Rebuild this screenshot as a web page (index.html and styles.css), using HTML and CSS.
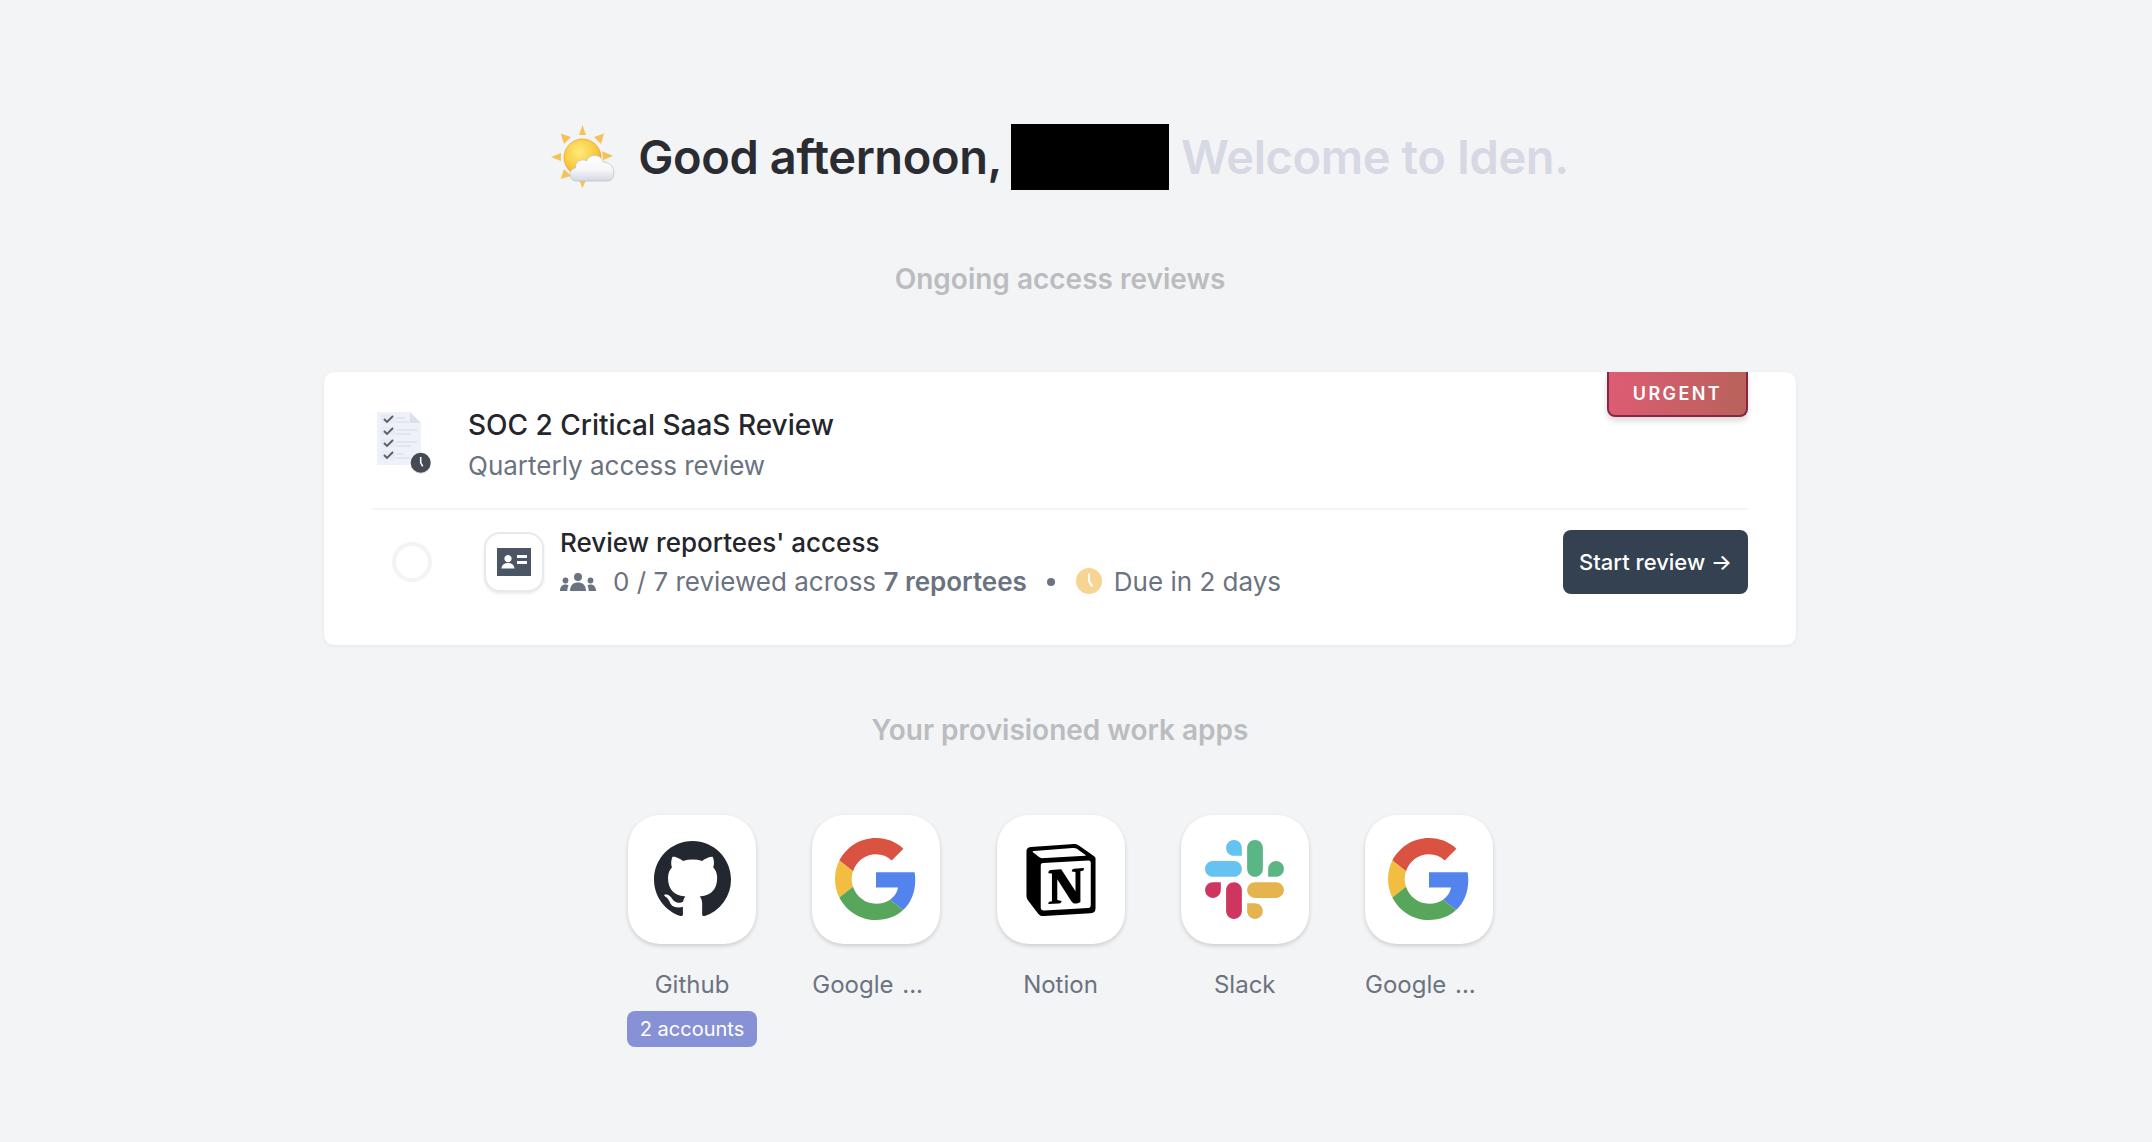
FILE: index.html
```html
<!DOCTYPE html>
<html lang="en">
<head>
<meta charset="utf-8">
<title>Iden</title>
<link rel="stylesheet" href="styles.css">
</head>
<body>
<main class="page">
  <h1 class="greeting">
    <svg class="emoji" viewBox="0 0 64 64" aria-hidden="true">
      <defs>
        <radialGradient id="sun" cx="42%" cy="35%" r="70%"><stop offset="0" stop-color="#fdeb7c"/><stop offset=".65" stop-color="#fac93c"/><stop offset="1" stop-color="#f0a030"/></radialGradient>
        <linearGradient id="cloud" x1="0" y1="0" x2="0" y2="1"><stop offset="0" stop-color="#ffffff"/><stop offset=".55" stop-color="#f7f7fa"/><stop offset="1" stop-color="#d5d8e1"/></linearGradient>
      </defs>
      <g fill="#f6c257">
        <polygon points="31.500,0 35,10 28,10"/>
        <polygon points="31.500,63 35,55 28,55"/>
        <polygon points="0,32 10,28 10,36"/>
        <polygon points="62,31 51,26 52,35"/>
        <polygon points="9.700,8.500 20,12 13,19"/>
        <polygon points="53,8.500 43,12 50,19"/>
        <polygon points="9.700,54 13,44 20,51"/>
      </g>
      <circle cx="31.500" cy="32.500" r="18.500" fill="url(#sun)" stroke="#e99a3c" stroke-width=".7"/>
      <path fill="url(#cloud)" stroke="#b9bdc8" stroke-width=".7" d="M26 56 C17 56 17 44 24.500 43 C23.500 36 32 33 35.500 36 C38.500 28 50.500 29 52 37 C60 37 64.500 45 62.500 50 C62.500 54 59 56 56 56 Z"/>
    </svg>
    <span class="hello">Good afternoon,</span>
    <span class="redacted"></span>
    <span class="welcome">Welcome to Iden.</span>
  </h1>

  <h2 class="section-title first">Ongoing access reviews</h2>

  <section class="card">
    <span class="urgent">URGENT</span>
    <header class="review-head">
      <svg class="doc" viewBox="0 0 60 64" aria-hidden="true">
        <path d="M5 1 H38 L49 12 V54 H5 Z" fill="#eff1f9"/>
        <path d="M38 1 L49 12 H38 Z" fill="#dde0ea"/>
        <g fill="#e9ebf4">
          <rect x="9" y="3.500" width="14" height="9"/>
          <rect x="9" y="15.500" width="14" height="9"/>
          <rect x="9" y="27.500" width="14" height="9"/>
          <rect x="9" y="39.500" width="14" height="9"/>
        </g>
        <g fill="none" stroke="#575d68" stroke-width="1.800">
          <path d="M12 8 l3 3 l6 -6"/>
          <path d="M12 20 l3 3 l6 -6"/>
          <path d="M12 32 l3 3 l6 -6"/>
          <path d="M12 44 l3 3 l6 -6"/>
        </g>
        <g fill="none" stroke="#e2e5f0" stroke-width="2">
          <path d="M24 7 h9 M24 11 h13"/>
          <path d="M24 19 h21 M24 23 h15"/>
          <path d="M24 31 h21 M24 35 h15"/>
          <path d="M24 43 h8 M24 47 h14"/>
        </g>
        <circle cx="48.700" cy="53" r="10" fill="#000" opacity=".12"/>
        <circle cx="48.700" cy="51.700" r="10" fill="#454a53"/>
        <path d="M48.700 46 v5.500 l2 3.800" fill="none" stroke="#fff" stroke-width="1.600"/>
      </svg>
      <div class="head-text">
        <div class="review-title">SOC 2 Critical SaaS Review</div>
        <div class="review-sub">Quarterly access review</div>
      </div>
    </header>
    <div class="task">
      <span class="radio"></span>
      <span class="task-icon">
        <svg viewBox="0 0 34 28" width="34" height="28" aria-hidden="true">
          <path fill-rule="evenodd" fill="#4b5563" d="M0 0 H34 V28 H0 Z M11 7 a3.600 3.600 0 1 0 .01 0 Z M4.500 20.500 c.4-4 3.300-5.500 6.500-5.500 s6.100 1.500 6.500 5.500 Z M20 7 v3 h10 v-3 Z M20 13 v3 h10 v-3 Z"/>
        </svg>
      </span>
      <div class="task-body">
        <div class="task-title">Review reportees' access</div>
        <div class="task-meta">
          <svg class="people" viewBox="0 0 36 18" aria-hidden="true">
            <g fill="#6b7280">
              <circle cx="18" cy="4" r="4"/>
              <path d="M10 18 c0-6 3.500-8.500 8-8.500 s8 2.500 8 8.500 Z"/>
              <circle cx="5.500" cy="7.500" r="2.900"/>
              <circle cx="30.500" cy="7.500" r="2.900"/>
              <path d="M0 18 c0-4 2-6.500 5.500-6.500 c1.300 0 2.300.3 3.100.9 c-.9 1.500-1.300 3.300-1.300 5.600 Z"/>
              <path d="M36 18 c0-4-2-6.500-5.500-6.500 c-1.300 0-2.300.3-3.100.9 c.9 1.500 1.300 3.300 1.300 5.600 Z"/>
            </g>
          </svg>
          <span class="count">0 / 7 reviewed across <b>7 reportees</b></span>
          <span class="dot"></span>
          <svg class="clock" viewBox="0 0 26 26" aria-hidden="true">
            <circle cx="13" cy="13" r="13" fill="#f6d594"/>
            <path d="M13 5.500 v8 l3.500 5" fill="none" stroke="#fff" stroke-width="2"/>
          </svg>
          <span class="due">Due in 2 days</span>
        </div>
      </div>
      <button class="start" type="button">Start review →</button>
    </div>
  </section>

  <h2 class="section-title second">Your provisioned work apps</h2>

  <section class="apps">
    <div class="app">
      <span class="tile">
        <svg class="logo-github" viewBox="0 0 16 16" aria-hidden="true"><path fill="#23272f" d="M8 0C3.580 0 0 3.580 0 8c0 3.540 2.290 6.530 5.470 7.590.4.07.55-.17.55-.38 0-.19-.01-.82-.01-1.490-2.010.37-2.530-.49-2.690-.94-.09-.23-.48-.94-.82-1.130-.28-.15-.68-.52-.01-.53.63-.01 1.080.58 1.230.82.72 1.210 1.870.87 2.330.66.07-.52.28-.87.51-1.070-1.780-.2-3.640-.89-3.640-3.950 0-.87.31-1.590.82-2.150-.08-.2-.36-1.020.08-2.120 0 0 .67-.21 2.200.82.64-.18 1.320-.27 2-.27.68 0 1.360.09 2 .27 1.530-1.040 2.200-.82 2.200-.82.44 1.100.16 1.920.08 2.120.51.56.82 1.270.82 2.150 0 3.070-1.870 3.750-3.650 3.950.29.25.54.73.54 1.480 0 1.070-.01 1.930-.01 2.200 0 .21.15.46.55.38A8.013 8.013 0 0016 8c0-4.420-3.580-8-8-8z"/></svg>
      </span>
      <span class="app-name">Github</span>
      <span class="accounts">2 accounts</span>
    </div>
    <div class="app">
      <span class="tile">
        <svg class="logo-google" viewBox="0 0 48 48" aria-hidden="true">
          <path fill="#da5240" d="M24 9.500c3.540 0 6.710 1.220 9.210 3.600l6.850-6.850C35.900 2.380 30.470 0 24 0 14.620 0 6.510 5.380 2.560 13.220l7.980 6.190C12.430 13.720 17.740 9.500 24 9.500z"/>
          <path fill="#5384ee" d="M46.980 24.550c0-1.570-.15-3.090-.38-4.550H24v9.020h12.940c-.58 2.960-2.260 5.480-4.780 7.180l7.730 6c4.510-4.180 7.090-10.360 7.090-17.650z"/>
          <path fill="#f3bd42" d="M10.530 28.590c-.48-1.450-.76-2.990-.76-4.590s.27-3.140.76-4.590l-7.980-6.190C.92 16.460 0 20.120 0 24c0 3.880.92 7.540 2.560 10.780l7.970-6.190z"/>
          <path fill="#58a65c" d="M24 48c6.480 0 11.930-2.130 15.890-5.810l-7.730-6c-2.150 1.450-4.920 2.300-8.160 2.300-6.260 0-11.570-4.220-13.470-9.910l-7.980 6.190C6.510 42.620 14.620 48 24 48z"/>
        </svg>
      </span>
      <span class="app-name trunc">Google ...</span>
    </div>
    <div class="app">
      <span class="tile">
        <svg class="logo-notion" viewBox="0 0 24 24" aria-hidden="true"><path fill="#000" d="M4.459 4.208c.746.606 1.026.56 2.428.466l13.215-.793c.28 0 .047-.28-.046-.326L17.860 1.968c-.42-.326-.981-.7-2.055-.607L3.010 2.295c-.466.046-.56.28-.374.466zm.793 3.080v13.904c0 .747.373 1.027 1.214.98l14.523-.84c.841-.046.935-.56.935-1.167V6.354c0-.606-.233-.933-.748-.887l-15.177.887c-.56.047-.747.327-.747.933zm14.337.745c.093.42 0 .84-.42.888l-.7.14v10.264c-.608.327-1.168.514-1.635.514-.748 0-.935-.234-1.495-.933l-4.577-7.186v6.952L12.210 19s0 .84-1.168.84l-3.222.186c-.093-.186 0-.653.327-.746l.84-.233V9.854L7.822 9.760c-.094-.42.14-1.026.793-1.073l3.456-.233 4.764 7.279v-6.440l-1.215-.14c-.093-.514.28-.887.747-.933zM1.936 1.035l13.310-.98c1.634-.14 2.055-.047 3.082.7l4.249 2.986c.7.513.934.653.934 1.213v16.378c0 1.026-.373 1.634-1.680 1.726l-15.458.934c-.98.047-1.448-.093-1.962-.747l-3.129-4.060c-.56-.747-.793-1.306-.793-1.960V2.667c0-.839.374-1.540 1.447-1.632z"/></svg>
      </span>
      <span class="app-name">Notion</span>
    </div>
    <div class="app">
      <span class="tile">
        <svg class="logo-slack" viewBox="0 0 2447.6 2452.5" aria-hidden="true">
          <path fill="#66c2f0" d="M897.4 0C762.1.1 652.7 109.9 652.8 245.2c-.1 135.3 109.4 245.1 244.7 245.2h244.7V245.3C1142.3 110 1032.7.2 897.4 0c.1 0 .1 0 0 0m0 654H244.8C109.5 654.100 0 763.900 0 899.200c-.2 135.300 109.300 245.100 244.600 245.300h652.800c135.300-.1 244.800-109.900 244.700-245.200.1-135.400-109.400-245.200-244.700-245.300z"/>
          <path fill="#5bb686" d="M2447.600 899.200c.1-135.300-109.400-245.100-244.700-245.200-135.300.1-244.800 109.900-244.700 245.200v245.300h244.700c135.300-.1 244.800-109.900 244.700-245.300zm-652.700 0V245.200C1795 110 1685.500.2 1550.200 0c-135.300.1-244.800 109.900-244.700 245.200v654c-.2 135.300 109.300 245.100 244.600 245.300 135.300-.1 244.800-109.900 244.800-245.300z"/>
          <path fill="#e5b44e" d="M1550.100 2452.500c135.300-.1 244.800-109.900 244.700-245.200.1-135.300-109.400-245.100-244.700-245.200h-244.700v245.200c-.1 135.300 109.400 245.100 244.700 245.200zm0-654.100h652.800c135.300-.1 244.800-109.900 244.700-245.200.2-135.300-109.300-245.100-244.600-245.300h-652.800c-135.300.1-244.800 109.900-244.700 245.200-.1 135.400 109.300 245.200 244.600 245.300z"/>
          <path fill="#cf365f" d="M0 1553.200c-.1 135.300 109.400 245.100 244.700 245.200 135.300-.1 244.800-109.900 244.700-245.200V1308H244.700C109.400 1308.100-.1 1417.900 0 1553.200zm652.700 0v654c-.2 135.300 109.300 245.100 244.600 245.300 135.300-.1 244.800-109.900 244.700-245.200V1553.200c.2-135.300-109.300-245.100-244.600-245.300-135.400 0-244.700 109.800-244.700 245.300z"/>
        </svg>
      </span>
      <span class="app-name">Slack</span>
    </div>
    <div class="app">
      <span class="tile">
        <svg class="logo-google" viewBox="0 0 48 48" aria-hidden="true">
          <path fill="#da5240" d="M24 9.500c3.540 0 6.710 1.220 9.210 3.600l6.850-6.850C35.900 2.380 30.470 0 24 0 14.620 0 6.510 5.380 2.560 13.220l7.980 6.190C12.430 13.720 17.740 9.500 24 9.500z"/>
          <path fill="#5384ee" d="M46.980 24.550c0-1.570-.15-3.090-.38-4.550H24v9.020h12.940c-.58 2.960-2.260 5.480-4.780 7.180l7.730 6c4.510-4.180 7.090-10.360 7.090-17.650z"/>
          <path fill="#f3bd42" d="M10.530 28.590c-.48-1.450-.76-2.990-.76-4.590s.27-3.140.76-4.590l-7.980-6.190C.92 16.460 0 20.120 0 24c0 3.880.92 7.540 2.560 10.780l7.970-6.190z"/>
          <path fill="#58a65c" d="M24 48c6.480 0 11.930-2.130 15.890-5.810l-7.730-6c-2.150 1.450-4.920 2.300-8.160 2.300-6.260 0-11.570-4.220-13.470-9.910l-7.980 6.190C6.510 42.620 14.620 48 24 48z"/>
        </svg>
      </span>
      <span class="app-name trunc">Google ...</span>
    </div>
  </section>
</main>
</body>
</html>
```

FILE: styles.css
```css
* { box-sizing: border-box; }
html, body { margin: 0; height: 100%; }
body {
  background: #f3f4f6;
  font-family: Inter, "Liberation Sans", sans-serif;
  color: #23272f;
  overflow: hidden;
}
.page {
  width: 2152px;
  padding: 124px 32px 0 0;
  display: flex;
  flex-direction: column;
  align-items: center;
}
.greeting {
  margin: 0;
  height: 66px;
  display: flex;
  align-items: center;
  font-size: 47px;
  font-weight: 600;
  line-height: 68px;
  letter-spacing: -0.4px;
}
.emoji { width: 64px; height: 64px; margin-right: 23px; }
.hello { color: #2a2c31; }
.redacted { width: 158px; height: 66px; background: #000; margin: 0 12px 0 9px; }
.welcome { color: #d6d9e3; }
.section-title {
  margin: 0;
  font-size: 28px;
  line-height: 34px;
  font-weight: 600;
  color: #bbbcbf;
}
.section-title.first { margin-top: 72px; }
.section-title.second { margin-top: 68px; }
.card {
  position: relative;
  width: 1472px;
  height: 273px;
  margin-top: 76px;
  padding: 0 48px;
  background: #fff;
  border-radius: 10px;
  box-shadow: 0 1px 4px rgba(0, 0, 0, 0.06);
}
.urgent {
  position: absolute;
  top: 0;
  right: 48px;
  width: 141px;
  height: 45px;
  display: flex;
  align-items: center;
  justify-content: center;
  background: linear-gradient(100deg, #de5c74, #b8625a);
  border: 2px solid #8a2443;
  border-top: 0;
  border-radius: 0 0 8px 8px;
  box-shadow: 0 4px 6px rgba(0, 0, 0, 0.15);
  color: #fff;
  font-size: 18px;
  font-weight: 600;
  letter-spacing: 2.4px;
}
.review-head {
  height: 138px;
  display: flex;
  align-items: flex-start;
  border-bottom: 2px solid #f3f4f6;
}
.doc { width: 60px; height: 64px; margin-top: 39px; flex: none; }
.head-text { margin: 33px 0 0 36px; }
.review-title { font-size: 28px; line-height: 40px; font-weight: 500; color: #24262b; }
.review-sub { font-size: 26px; line-height: 42px; color: #6b7280; }
.task {
  display: flex;
  align-items: center;
  height: 64px;
  margin-top: 20px;
}
.radio {
  width: 40px;
  height: 40px;
  margin-left: 20px;
  border: 4px solid #f3f4f6;
  border-radius: 50%;
  flex: none;
}
.task-icon {
  width: 60px;
  height: 60px;
  margin-left: 52px;
  display: flex;
  align-items: center;
  justify-content: center;
  flex: none;
  background: #fff;
  border: 2px solid #e8e9ec;
  border-radius: 16px;
  box-shadow: 0 2px 3px rgba(0, 0, 0, 0.08);
}
.task-body { margin-left: 16px; flex: 1; }
.task-title { font-size: 26px; line-height: 38px; font-weight: 500; color: #24262b; }
.task-meta {
  display: flex;
  align-items: center;
  height: 38px;
  font-size: 26px;
  color: #6b7280;
}
.people { width: 36px; height: 18px; flex: none; margin-top: 2px; }
.count { margin-left: 17px; }
.count b { font-weight: 600; }
.dot { width: 8px; height: 8px; margin: 2px 0 0 20px; border-radius: 50%; background: #6b7280; }
.clock { width: 26px; height: 26px; margin-left: 21px; flex: none; }
.due { margin-left: 12px; }
.start {
  width: 185px;
  height: 64px;
  padding: 0;
  border: 0;
  border-radius: 8px;
  background: #334150;
  color: #fff;
  font: 500 22px Inter, "Liberation Sans", sans-serif;
  flex: none;
}
.apps {
  display: flex;
  gap: 56.25px;
  margin: 68px 0 0 1px;
}
.app {
  width: 128px;
  display: flex;
  flex-direction: column;
  align-items: center;
}
.tile {
  width: 128px;
  height: 129px;
  display: flex;
  align-items: center;
  justify-content: center;
  background: #fff;
  border-radius: 32px;
  box-shadow: 0 2px 4px rgba(0, 0, 0, 0.16);
}
.logo-github { width: 77px; height: 77px; }
.logo-google { width: 82px; height: 82px; margin-top: -1px; }
.logo-notion { width: 72px; height: 72px; }
.logo-slack { width: 79px; height: 79px; }
.app-name {
  margin-top: 23px;
  font-size: 24px;
  line-height: 36px;
  color: #6b7280;
  white-space: nowrap;
}
.app-name.trunc { align-self: flex-start; word-spacing: 2px; }
.accounts {
  margin-top: 8px;
  width: 130px;
  height: 36px;
  flex: none;
  display: flex;
  align-items: center;
  justify-content: center;
  border-radius: 8px;
  background: #8791d5;
  color: #fff;
  font-size: 20px;
}
```
